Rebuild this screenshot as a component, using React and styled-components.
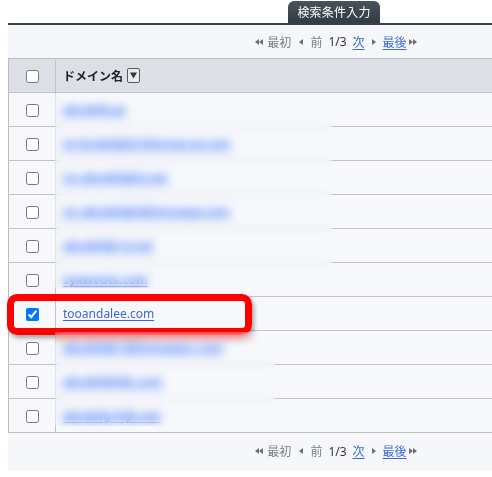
import React from "react";
import styled, { createGlobalStyle } from "styled-components";

const GlobalStyle = createGlobalStyle`
  html, body {
    margin: 0;
    padding: 0;
    overflow: hidden;
    background: #ffffff;
  }
  body {
    font-family: "Noto Sans", "Noto Sans CJK JP", sans-serif;
    font-size: 12px;
    color: #333;
  }
`;

const Viewport = styled.div`
  width: 100vw;
  overflow: hidden;
`;

const Page = styled.div`
  width: 652px;
  padding: 1px 0 0 8px;
`;

const TabRow = styled.div`
  display: flex;
  justify-content: center;
`;

const Tab = styled.div`
  height: 22px;
  padding: 0 9px;
  display: flex;
  align-items: center;
  border-radius: 6px 6px 0 0;
  background: linear-gradient(#4a535c, #323a42);
  color: #ffffff;
  font-size: 12px;
  letter-spacing: 0.2px;
`;

const Panel = styled.div`
  border-top: 2px solid #37414b;
  background: #f6f7fb;
  padding-bottom: 2px;
`;

const Pager = styled.div`
  height: ${(p) => p.$h ?? 34}px;
  display: flex;
  justify-content: center;
  align-items: center;
  font-size: 12px;
  color: #777;
  padding-left: 4px;
`;

const PagerItem = styled.span`
  display: inline-flex;
  align-items: center;
  margin-right: ${(p) => p.$gap ?? 7}px;
  color: ${(p) => (p.$link ? "#3d68cf" : p.$dark ? "#333" : "#7a7d85")};
  text-decoration: ${(p) => (p.$link ? "underline" : "none")};
  text-underline-offset: 2px;
`;

const Arrow = styled.svg`
  display: block;
  margin: 0 ${(p) => p.$after ?? 0}px 0 ${(p) => p.$before ?? 0}px;
`;

const TableWrap = styled.div`
  position: relative;
`;

const Table = styled.table`
  width: 100%;
  border-collapse: collapse;
  border: 1px solid #bdbdbd;
  border-right: none;
`;

const HeadRow = styled.tr`
  height: 34px;
  background: #dcdfe6;
`;

const Row = styled.tr`
  height: 34px;
  background: #f7f8fb;
  border-top: 1px solid #c4c4c4;
`;

const CheckCell = styled.td`
  position: relative;
  width: 46px;
  padding: 0;
  text-align: center;
  border-right: 1px solid #c4c4c4;
`;

const NameCell = styled.td`
  padding: 0 0 0 7px;
  font-size: 12px;
  color: #222;
  font-weight: ${(p) => (p.$head ? 600 : 400)};
`;

const HeadLabel = styled.div`
  display: flex;
  align-items: center;
  gap: 4px;
`;

const SortBox = styled.span`
  display: inline-flex;
  align-items: center;
  justify-content: center;
  width: 13px;
  height: 15px;
  border: 1px solid #5a5a5a;
  border-radius: 2px;
  background: #e9eaee;
  box-sizing: border-box;
`;

const Check = styled.input`
  margin: 0;
  width: 13px;
  height: 13px;
  vertical-align: middle;
`;

const DomainLink = styled.a`
  color: #3d68cf;
  text-decoration: underline;
  text-underline-offset: 2px;
  font-size: 12px;
  font-weight: ${(p) => (p.$hidden ? 700 : 400)};
`;

const Blur = styled.div`
  position: absolute;
  left: 47px;
  top: ${(p) => p.$top}px;
  width: ${(p) => p.$width}px;
  height: ${(p) => p.$height}px;
  backdrop-filter: blur(5px) saturate(1.4);
  background: rgba(250, 251, 254, 0.12);
`;

const Highlight = styled.div`
  position: absolute;
  left: -2px;
  top: -3px;
  width: 245px;
  height: 41px;
  box-sizing: border-box;
  border: 7px solid #ff0000;
  border-radius: 10px;
  box-shadow: 2px 3px 4px rgba(0, 0, 0, 0.35);
  pointer-events: none;
`;

const rows = [
  { name: "abcdefg.jp" },
  { name: "xn-bcdefghij-klmnop-qr.com" },
  { name: "xn-abcdefghij.net" },
  { name: "xn-abcdefghijklmnopqr.com" },
  { name: "abcdefgh-ij.net" },
  { name: "zyxwvuts.com" },
  { name: "tooandalee.com", checked: true },
  { name: "abcdefgh-ijklmnopqrs.com" },
  { name: "abcdefghijk.com" },
  { name: "abcdefg-hijk.net" },
];

function Tri({ dir = "left", double, before, after }) {
  const one = dir === "left" ? "M4 0 L0 3 L4 6 Z" : "M0 0 L4 3 L0 6 Z";
  const two = dir === "left" ? "M8 0 L4 3 L8 6 Z" : "M4 0 L8 3 L4 6 Z";
  return (
    <Arrow
      width={double ? 8 : 4}
      height="6"
      viewBox={`0 0 ${double ? 8 : 4} 6`}
      $before={before}
      $after={after}
    >
      <path d={one} fill="#6b6e75" />
      {double && <path d={two} fill="#6b6e75" />}
    </Arrow>
  );
}

function Pagination({ h }) {
  return (
    <Pager $h={h}>
      <PagerItem $gap={8}>
        <Tri dir="left" double after={4} />
        最初
      </PagerItem>
      <PagerItem $gap={7}>
        <Tri dir="left" />
      </PagerItem>
      <PagerItem $gap={6}>前</PagerItem>
      <PagerItem $dark $gap={6}>
        1/3
      </PagerItem>
      <PagerItem $link $gap={7}>
        次
      </PagerItem>
      <PagerItem $gap={7}>
        <Tri dir="right" />
      </PagerItem>
      <PagerItem $gap={0} $link>
        最後
      </PagerItem>
      <PagerItem $gap={0}>
        <Tri dir="right" double before={2} />
      </PagerItem>
    </Pager>
  );
}

export default function App() {
  return (
    <Viewport>
      <GlobalStyle />
      <Page>
        <TabRow>
          <Tab>検索条件入力</Tab>
        </TabRow>
        <Panel>
          <Pagination h={33} />
          <TableWrap>
            <Table>
              <thead>
                <HeadRow>
                  <CheckCell>
                    <Check type="checkbox" readOnly />
                  </CheckCell>
                  <NameCell $head>
                    <HeadLabel>
                      ドメイン名
                      <SortBox>
                        <svg width="7" height="7" viewBox="0 0 7 7">
                          <path d="M0 0.5 L7 0.5 L3.5 6.5 Z" fill="#333" />
                        </svg>
                      </SortBox>
                    </HeadLabel>
                  </NameCell>
                </HeadRow>
              </thead>
              <tbody>
                {rows.map((r) => (
                  <Row key={r.name}>
                    <CheckCell>
                      <Check type="checkbox" checked={!!r.checked} readOnly />
                      {r.checked && <Highlight />}
                    </CheckCell>
                    <NameCell>
                      <DomainLink href="#" $hidden={!r.checked}>
                        {r.name}
                      </DomainLink>
                    </NameCell>
                  </Row>
                ))}
              </tbody>
            </Table>
            <Blur $top={36} $width={277} $height={194} />
            <Blur $top={274} $width={220} $height={94} />
          </TableWrap>
          <Pagination h={36} />
        </Panel>
      </Page>
    </Viewport>
  );
}
